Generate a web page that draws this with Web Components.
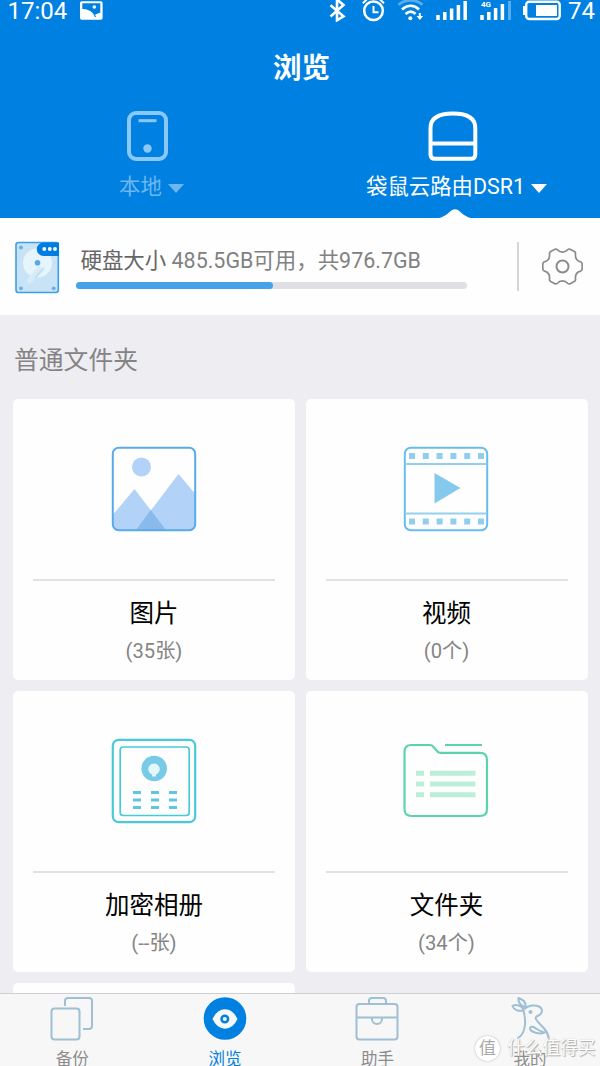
<!DOCTYPE html>
<html lang="zh-CN">
<head>
<meta charset="utf-8">
<title>浏览</title>
<style>
html,body{margin:0;padding:0}
body{width:600px;height:1066px;overflow:hidden;background:#eeedf2;font-family:Roboto,"Noto Sans CJK SC",sans-serif}
</style>
</head>
<body>
<browse-app></browse-app>
<script>
function define(name, html) {
  const t = document.createElement('template');
  t.innerHTML = html;
  customElements.define(name, class extends HTMLElement {
    constructor() {
      super();
      this.attachShadow({mode: 'open'}).appendChild(t.content.cloneNode(true));
    }
  });
}

define('status-bar', `
<style>
:host{display:flex;height:22px;color:#fff;font-size:24px;line-height:22px;overflow:hidden}
.time{width:79px;padding-left:7.500px;box-sizing:border-box}
svg{display:block;flex:none}
.pct{width:32px;text-align:left}
.net{font:bold 8px/8px Roboto,sans-serif}
.sp{flex:1}
</style>
<span class="time">17:04</span>
<svg width="26" height="22" viewBox="79 0 26 22"><rect x="80" y="1.200" width="22.600" height="18.600" rx="1.800" fill="#fff"/><path d="M82.300 3.300h18v9.200l-5.300 2.300 1.300 2.400-1.600-.5C93.500 12.500 88.500 8.600 82.300 9z" fill="#0080e0"/><circle cx="94.300" cy="7" r="1.800" fill="#fff"/></svg>
<span class="sp"></span>
<svg width="242" height="22" viewBox="326 0 242 22" fill="none" stroke="#fff" stroke-width="2">
<path d="M330.500 5.300l13 11-6.500 4V-.5l6.500 5.500-13 11.500" stroke-width="2.600"/>
<circle cx="373.500" cy="10.800" r="9.300" stroke-width="2.500"/><path d="M373.500 6v6.300h5M362.800 3.200l4-3.700M384 3.200l-4-3.700"/>
<path d="M398.500 4.800c7-6 17-6 24 0" stroke="#58adf0" stroke-width="2.700"/><path d="M402 9.500c5.500-4.800 12-4.800 17 0M405.500 14c3.500-3 7-3 10 0" stroke-width="2.700"/><circle cx="410.300" cy="18.300" r="2" fill="#fff" stroke="none"/><path d="M419.800 13v4"/><path d="M416.500 16h6.600l-3.300 4z" fill="#fff" stroke="none"/>
<path d="M438 15v5M444.800 12v8M451.600 8.500V20M458.400 5V20M465.200 1V20" stroke-width="3.500"/>
<path d="M482 15v5M488.800 12v8M495.600 8V20M502.400 4V20" stroke-width="3.500"/><path d="M509.500 1V20" stroke="#58adf0" stroke-width="3"/>
<text class="net" x="481" y="7" fill="#fff" stroke="none">4G</text>
<rect x="526.200" y="1.800" width="33.500" height="17.200" rx="3" stroke-width="2.400"/><path d="M524.500 6v9" stroke-width="3"/><rect x="536" y="5" width="21" height="11" fill="#fff" stroke="none"/>
</svg>
<span class="pct">74</span>
`);

define('source-tab', `
<style>
:host{display:flex;flex-direction:column;align-items:center;color:#fff;font-size:21.400px;line-height:26px;position:relative}
:host([dim]){color:#6db7f1}
.icon{height:50px;display:flex;margin-right:7px}
.label{display:flex;align-items:center;gap:6px;margin-top:13px;white-space:nowrap}
.arrow{width:0;height:0;border:8px solid transparent;border-top:9.500px solid currentColor;border-bottom:0;margin-top:2px}
.notch{display:none;position:absolute;bottom:-1px;left:50%;margin-left:-18px}
:host([active]) .notch{display:block}
</style>
<div class="icon"><slot></slot></div>
<div class="label"><slot name="label"></slot><i class="arrow"></i></div>
<svg class="notch" width="32" height="9" viewBox="0 0 32 9"><path d="M0 9C6 8 10 3 13 1q3-1.600 6 0C22 3 26 8 32 9z" fill="#fff"/></svg>
`);

define('app-header', `
<style>
:host{display:block;height:217.500px;background:#0080e0;color:#fff}
h1{margin:0;height:89px;line-height:93px;font-size:28.500px;font-weight:700;text-align:center;padding-left:3px}
.tabs{display:grid;grid-template-columns:303px 307px;width:610px;height:106px}
svg{display:block}
</style>
<status-bar></status-bar>
<h1>浏览</h1>
<div class="tabs">
<source-tab dim>
<svg width="42" height="50" viewBox="0 0 42 50" fill="none" stroke="#8ac9f7" stroke-width="4"><rect x="2" y="2" width="37" height="46" rx="7"/><path d="M11.500 9.700h18" stroke-width="3"/><circle cx="20.500" cy="37.500" r="4.200" fill="#8ac9f7" stroke="none"/></svg>
<span slot="label">本地</span></source-tab>
<source-tab active>
<svg width="50" height="50" viewBox="0 0 50 50" fill="none" stroke="#fff" stroke-width="4"><path d="M2.500 17C2.500 5.500 13 2.500 25 2.500S47.300 5.500 47.300 17v26.500q0 4.300-4.300 4.300H7q-4.500 0-4.500-4.300zM2.500 32.500h45"/></svg>
<span slot="label">袋鼠云路由DSR1</span></source-tab>
</div>
`);

define('storage-panel', `
<style>
:host{display:flex;height:97.500px;background:#fefefe;color:#818181;box-sizing:border-box;padding:23px 17px 0 14px}
svg{display:block;flex:none}
.info{width:391px;margin-left:15.500px;padding-top:6px}
.txt{font-size:21.450px;line-height:28px;white-space:nowrap;padding-left:5px}
.txt b{font-weight:400;color:#666}
.bar{height:7px;margin-top:7px;border-radius:4px;background:#e0e0e4}
.bar i{display:block;width:197px;height:7px;border-radius:4px;background:#46a3e9}
.sep{width:2px;height:49px;margin:1px 0 0 50.500px;background:#d6d6d6}
.gear{margin:5px 0 0 23px}
</style>
<svg width="46" height="53" viewBox="0 0 46 53"><rect x="2" y="1.500" width="42.300" height="50" rx="2.500" fill="#c9e3f6" stroke="#3c9fe5" stroke-width="1.600"/><circle cx="23.500" cy="22" r="14.500" fill="#e6f5fc"/><path d="M28 27l-9 13q-3.500 4-5.500 1.500-1.300-2.500 2-6L25 25" fill="#d7ecf9"/><path d="M30 27l-9 10" stroke="#c3dff4" stroke-width="2"/><circle cx="23.500" cy="21.700" r="2.800" fill="#57a9e8"/><g fill="#66afe7"><circle cx="7" cy="6.500" r="1.900"/><circle cx="7" cy="47.300" r="1.900"/><circle cx="39.700" cy="47.300" r="1.900"/></g><path d="M45 1.500V15H29.500a6.700 6.700 0 0 1 0-13.500z" fill="#007de0"/><g fill="#fff"><circle cx="30.300" cy="8" r="1.900"/><circle cx="35.800" cy="8" r="1.900"/><circle cx="41" cy="8" r="1.900"/></g></svg>
<div class="info"><div class="txt"><b>硬盘大小</b> 485.5GB可用，共976.7GB</div><div class="bar"><i></i></div></div>
<div class="sep"></div>
<svg class="gear" width="41" height="41" viewBox="542 246 41 41" fill="none" stroke="#8b8b8b" stroke-width="1.700" stroke-linejoin="round"><path d="M549.500 250.500q-.2-1.300 1.200-2l4.200-2.200q1.500-.6 2.500.5c2.500 3.200 7.700 3.200 10.200 0q1-1.100 2.500-.5l4.200 2.200q1.400.7 1.200 2c-.5 4.700 1.200 7.500 5 8.300q1.300.4 1.500 1.500.5 3.200 0 6.400-.2 1.100-1.500 1.500c-3.800.8-5.500 3.800-5 8.300q.2 1.300-1.200 2l-4.200 2.200q-1.500.6-2.500-.5c-2.500-3.200-7.700-3.200-10.200 0q-1 1.100-2.500.5l-4.200-2.200q-1.400-.7-1.200-2c.5-4.500-1.200-7.500-5-8.300q-1.300-.4-1.500-1.500-.5-3.200 0-6.400.2-1.100 1.500-1.500c3.800-.8 5.500-3.600 5-8.300z" transform="translate(0 3)"/><circle cx="562.500" cy="266.500" r="6" stroke-width="2"/></svg>
`);

define('folder-card', `
<style>
:host{display:flex;flex-direction:column;align-items:center;height:280.500px;border-radius:5px;background:#fefefe;box-sizing:border-box;padding:46.500px 20px 0}
.icon{height:86px;margin-right:1px}
.line{align-self:stretch;height:2px;background:#e2e2e3;margin-top:47px}
.name{font-size:24.500px;line-height:30px;color:#000;margin-top:18px}
.count{font-size:20.200px;line-height:26px;color:#858585;margin-top:9px}
</style>
<div class="icon"><slot></slot></div>
<div class="line"></div>
<div class="name"><slot name="name"></slot></div>
<div class="count"><slot name="count"></slot></div>
`);

define('folder-grid', `
<style>
:host{display:block;height:678px;overflow:hidden;box-sizing:border-box;padding:0 12px 0 13px}
h2{margin:0;font-weight:400;font-size:24.800px;line-height:34px;color:#848486;padding:29px 0 21px 1px}
.grid{display:grid;grid-template-columns:282px 282px;gap:11.500px 10.500px}
svg{display:block}
</style>
<h2>普通文件夹</h2>
<div class="grid">
<folder-card>
<svg width="86" height="86" viewBox="0 0 86 86"><defs><clipPath id="c"><rect x="2" y="2" width="82" height="82" rx="5"/></clipPath></defs><g clip-path="url(#c)"><path d="M0 71L23.500 43 55 84H0zM25 84L67.500 28 86 50v34z" fill="#b2d3f7"/><path d="M25 84L39.700 64 55 84z" fill="#89baeb"/></g><circle cx="30.500" cy="21" r="9.500" fill="#b2d3f7"/><rect x="1.800" y="1.800" width="82.400" height="82.400" rx="6" fill="none" stroke="#59aaec" stroke-width="2"/></svg>
<span slot="name">图片</span><span slot="count">(35张)</span></folder-card>
<folder-card>
<svg width="86" height="86" viewBox="0 0 86 86" fill="none" stroke="#67bdec" stroke-width="2"><rect x="1.800" y="1.800" width="82.400" height="82.400" rx="6"/><path d="M2 18h82M2 67.500h82" stroke="#93d0ef"/><path d="M31.500 27v30.500L57.500 42z" fill="#85caed" stroke="none"/><path d="M6 10h76M6 75.500h76" stroke="#8fceef" stroke-width="6" stroke-dasharray="6 7.800"/></svg>
<span slot="name">视频</span><span slot="count">(0个)</span></folder-card>
<folder-card>
<svg width="86" height="86" viewBox="0 0 86 86" fill="none" stroke="#49cad8" stroke-width="2.200"><rect x="1.800" y="1.800" width="82.400" height="82.400" rx="6"/><rect x="9.200" y="9" width="69" height="68.500" rx="3" stroke-width="1.700"/><circle cx="43.200" cy="30.500" r="12.800" fill="#77cbe7" stroke="none"/><path d="M41 36.500a5.700 5.700 0 1 1 4 0v2h-4z" fill="#e4f7fa" stroke="none"/><path d="M22 54.500h45M22 62h45M22 69.500h45" stroke="#5ec7dd" stroke-width="3" stroke-dasharray="8 10"/></svg>
<span slot="name">加密相册</span><span slot="count">(--张)</span></folder-card>
<folder-card>
<svg width="86" height="86" viewBox="0 0 86 86" fill="none" stroke="#5bd4a8" stroke-width="2.200"><path d="M8.500 7H27q2 0 3.500 2l4 4.500q1 1.300 3 1.300H77q7 0 7 7V71q0 7-7 7H8.500q-7 0-7-7V14q0-7 7-7z"/><path d="M42 7h37"/><path d="M13 35.200h8M27 35.200h45.500M13 46h8M27 46h45.500M13 56.800h8M27 56.800h45.500" stroke="#bbefd9" stroke-width="5"/></svg>
<span slot="name">文件夹</span><span slot="count">(34个)</span></folder-card>
<folder-card></folder-card>
</div>
`);

define('nav-item', `
<style>
:host{display:flex;flex-direction:column;align-items:center;color:#8b8b8b;font-size:16.500px;line-height:22px;padding-top:3px}
:host([active]){color:#0080e0}
.icon{height:44px}
span{margin-top:8px}
</style>
<div class="icon"><slot></slot></div><span><slot name="label"></slot></span>
`);

define('nav-bar', `
<style>
:host{display:grid;grid-template-columns:repeat(4,152.600px);height:73px;box-sizing:border-box;border-top:1px solid #cfced3;background:#f7f7f7;overflow:hidden}
nav-item{margin-left:-8px}
svg{display:block}
em{font-style:normal}
</style>
<nav-item><svg width="44" height="44" viewBox="0 0 44 44" fill="none" stroke="#9fbfd5" stroke-width="2"><rect x="1.500" y="11.500" width="28" height="31" rx="3"/><path d="M15 9V4q0-3 3-3h21q3 0 3 3v25q0 3-3 3h-6"/></svg><em slot="label">备份</em></nav-item>
<nav-item active><svg width="44" height="44" viewBox="0 0 44 44"><circle cx="22" cy="21.500" r="21.300" fill="#0080e0"/><path d="M9.500 22q4.500-9.700 12.500-9.700T34.500 22q-4.500 9.700-12.500 9.700T9.500 22z" fill="#f7f7f7"/><circle cx="21.800" cy="22" r="3.300" fill="#f7f7f7" stroke="#0080e0" stroke-width="2.500"/></svg><em slot="label">浏览</em></nav-item>
<nav-item><svg width="44" height="44" viewBox="0 0 44 44" fill="none" stroke="#9fbfd5" stroke-width="2"><rect x="1.500" y="7" width="41" height="35.500" rx="3"/><path d="M14 7V4q0-3 3-3h11q3 0 3 3v3M1.500 20.500h41M17 20.500v1.500a4.800 4.800 0 0 0 10 0v-1.500"/></svg><em slot="label">助手</em></nav-item>
<nav-item><svg width="44" height="44" viewBox="508 997 44 44" fill="none" stroke="#9fbfd5" stroke-width="2" stroke-linejoin="round" stroke-linecap="round"><path d="M523 1010.500c-4 1-9 0-10.500-4.500 4-2 9-.5 11 3.500M524.500 1007c-5-2-6.500-4.500-6-9 5 1.500 7.500 5 7 9"/><path d="M525 1008.500c4-3.500 10-3.800 14-2 4.500 2.200 3.500 7.500-.5 9-3 1-3.500 2.500-2 4.500 2.500 3.500 5.500 6 8 9 2.500 3 4 6 4.200 9.500M523.500 1010.500c1 4 2 8 1.500 14-.5 6-2.500 11-7 13.500M544.500 1032.500c-4 2-9 .500-12-1-4-2-2.500-6 1-4.500 3 1.500 6 4.500 11 5.500"/><circle cx="530.500" cy="1012" r="1" fill="#9fbfd5"/></svg><em slot="label">我的</em></nav-item>
`);

define('water-mark', `
<style>
:host{position:absolute;left:475px;top:1035.500px;display:flex;align-items:center;gap:7px;height:25px;color:#fff;white-space:nowrap}
.seal{width:25px;height:25px;border-radius:50%;background:#fff;color:#aaa;font-size:17px;line-height:25px;text-align:center;box-shadow:0 0 2px #aaa}
.name{font-size:17.700px;line-height:27px;text-shadow:1px 1px 1px #aaa,0 0 1px #bbb}
</style>
<span class="seal">值</span><span class="name">什么值得买</span>
`);

define('browse-app', `
<style>
:host{display:flex;flex-direction:column;position:relative;width:600px;height:1066px;overflow:hidden}
</style>
<app-header></app-header>
<storage-panel></storage-panel>
<folder-grid></folder-grid>
<nav-bar></nav-bar>
<water-mark></water-mark>
`);
</script>
</body>
</html>
